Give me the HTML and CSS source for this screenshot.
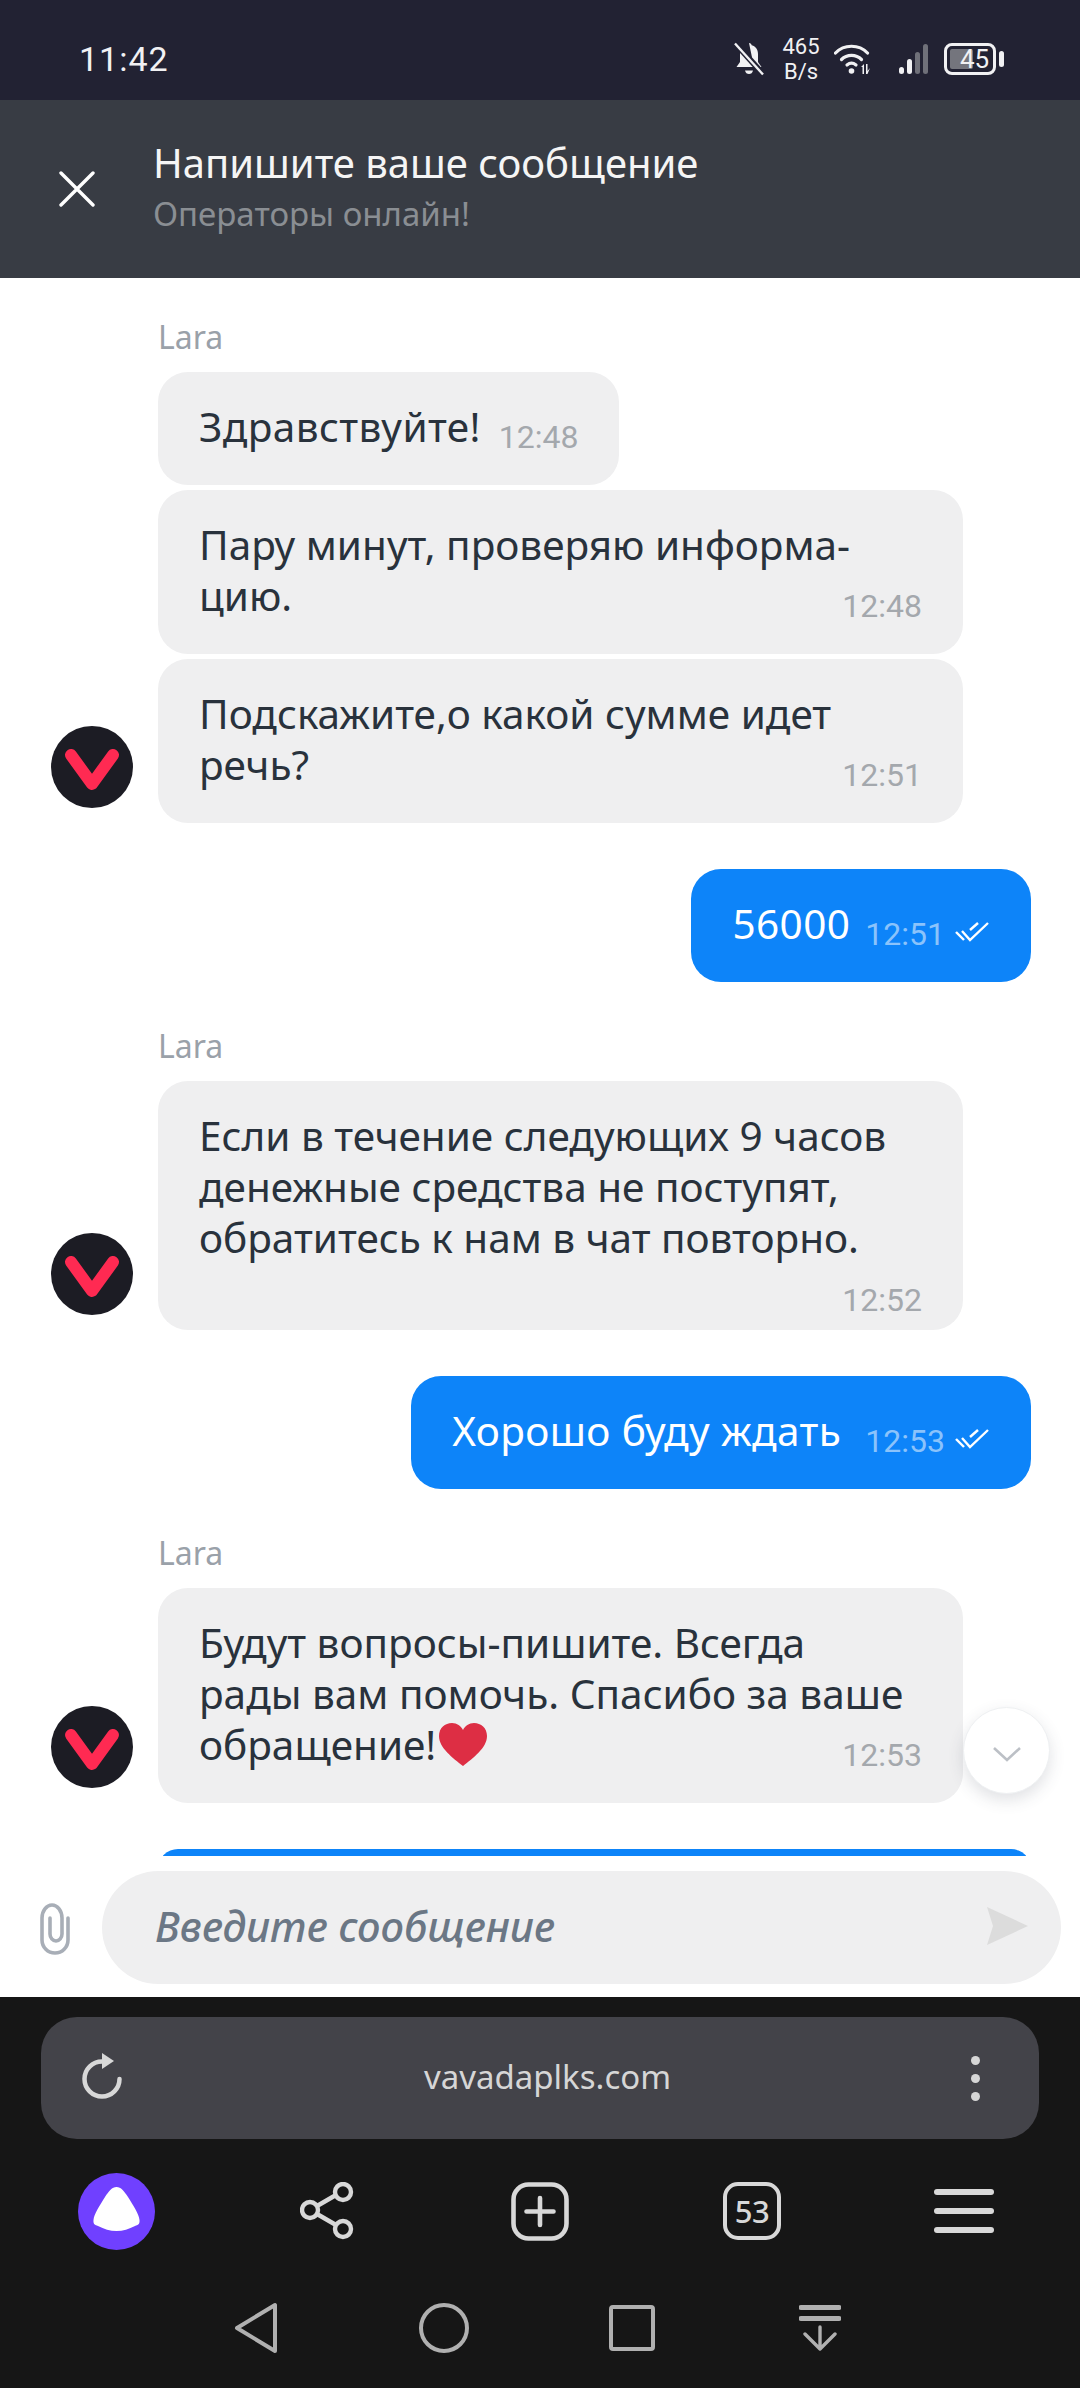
FILE: index.html
```html
<!DOCTYPE html>
<html lang="ru">
<head>
<meta charset="utf-8">
<title>Чат</title>
<link rel="stylesheet" href="styles.css">
</head>
<body>
<div class="app">
  <div class="status">
    <span class="clock">11:42</span>
    <div class="status-icons">
      <svg class="ic-bell" width="30" height="34" viewBox="0 0 30 34"><path d="M15 1c1.600 0 2.500 1 2.700 2.300C22 4.500 24 8 24 12v8l3.500 5H2.500L6 20v-8c0-1.500.3-3 1-4.300L20 25" fill="#f1f1f3"/><path d="M11 28.500h8c-.5 2.500-2 3.500-4 3.500s-3.500-1-4-3.500z" fill="#f1f1f3"/><path d="M1 1l28 31" stroke="#222233" stroke-width="6"/><path d="M1 1.500l28 31" stroke="#f1f1f3" stroke-width="2.400"/></svg>
      <div class="speed"><span>465</span><span>B/s</span></div>
      <svg class="ic-wifi" width="38" height="32" viewBox="0 0 38 32"><g fill="none" stroke="#f1f1f3" stroke-width="3.200" stroke-linecap="round"><path d="M1.500 10C10 1 25 1 33.500 10"/><path d="M7.500 16.500C13 11 22 11 27.500 16.500"/><path d="M13 22c3-2.500 6-2.500 9 0"/></g><circle cx="17.500" cy="28" r="2.800" fill="#f1f1f3"/><path d="M27 24l3-3v10h-1.500v-7zM32 21h1.500v7l2.500-3-2.500 6H32z" fill="#f1f1f3"/></svg>
      <div class="signal"><i class="b1"></i><i class="b2"></i><i class="b3"></i><i class="b4"></i></div>
      <div class="battery"><div class="battery-body"><span class="battery-fill"></span><span class="battery-num">45</span></div><i class="battery-tip"></i></div>
    </div>
  </div>

  <header class="head">
    <svg class="ic-close" width="36" height="36" viewBox="0 0 36 36"><path d="M2 2l32 32M34 2L2 34" stroke="#fff" stroke-width="3.400" stroke-linecap="round"/></svg>
    <div class="head-text">
      <div class="head-title">Напишите ваше сообщение</div>
      <div class="head-sub">Операторы онлайн!</div>
    </div>
  </header>

  <main class="chat">
    <section class="group">
      <div class="name">Lara</div>
      <div class="group-row">
        <div class="avatar"><svg width="82" height="82" viewBox="0 0 82 82"><circle cx="41" cy="41" r="41" fill="#1c1c24"/><path d="M20 29l21 29 21-29" fill="none" stroke="#ff2a52" stroke-width="12" stroke-linecap="round" stroke-linejoin="round"/></svg></div>
        <div class="stack">
          <div class="bubble bubble-in bubble-short"><p class="text">Здравствуйте!</p><span class="time">12:48</span></div>
          <div class="bubble bubble-in"><p class="text">Пару минут, проверяю информа-<br>цию.</p><span class="time time-end">12:48</span></div>
          <div class="bubble bubble-in"><p class="text">Подскажите,о какой сумме идет<br>речь?</p><span class="time time-end">12:51</span></div>
        </div>
      </div>
    </section>

    <div class="bubble bubble-out bubble-short"><p class="text">56000</p><span class="time">12:51</span><svg class="ic-check" width="35" height="22" viewBox="0 0 35 22"><g fill="none" stroke="#fff" stroke-width="2.400"><path d="M1 11l8 8"/><path d="M7 10l8 9L33 2"/><path d="M15 9l8-7"/></g></svg></div>

    <section class="group">
      <div class="name">Lara</div>
      <div class="group-row">
        <div class="avatar"><svg width="82" height="82" viewBox="0 0 82 82"><circle cx="41" cy="41" r="41" fill="#1c1c24"/><path d="M20 29l21 29 21-29" fill="none" stroke="#ff2a52" stroke-width="12" stroke-linecap="round" stroke-linejoin="round"/></svg></div>
        <div class="stack">
          <div class="bubble bubble-in"><p class="text">Если в течение следующих 9 часов<br>денежные средства не поступят,<br>обратитесь к нам в чат повторно.</p><span class="time time-below">12:52</span></div>
        </div>
      </div>
    </section>

    <div class="bubble bubble-out bubble-short"><p class="text text-gap">Хорошо буду ждать</p><span class="time">12:53</span><svg class="ic-check" width="35" height="22" viewBox="0 0 35 22"><g fill="none" stroke="#fff" stroke-width="2.400"><path d="M1 11l8 8"/><path d="M7 10l8 9L33 2"/><path d="M15 9l8-7"/></g></svg></div>

    <section class="group">
      <div class="name">Lara</div>
      <div class="group-row">
        <div class="avatar"><svg width="82" height="82" viewBox="0 0 82 82"><circle cx="41" cy="41" r="41" fill="#1c1c24"/><path d="M20 29l21 29 21-29" fill="none" stroke="#ff2a52" stroke-width="12" stroke-linecap="round" stroke-linejoin="round"/></svg></div>
        <div class="stack">
          <div class="bubble bubble-in"><p class="text">Будут вопросы-пишите. Всегда<br>рады вам помочь. Спасибо за ваше<br>обращение!<svg class="ic-heart" width="48" height="43" viewBox="0 0 48 43"><path d="M24 43C14 35 0 25 0 13 0 5 6 0 13 0c5 0 9 3 11 7 2-4 6-7 11-7 7 0 13 5 13 13 0 12-14 22-24 30z" fill="#dd2e44"/></svg></p><span class="time time-end">12:53</span></div>
        </div>
      </div>
    </section>

    <div class="bubble bubble-out bubble-cut"></div>

    <button class="scroll-down"><svg width="30" height="16" viewBox="0 0 30 16"><path d="M2 2l13 12L28 2" fill="none" stroke="#bcc0c6" stroke-width="2.600"/></svg></button>
  </main>

  <div class="composer">
    <svg class="ic-clip" width="34" height="54" viewBox="18 12 34 54"><path d="M48 28V50A13 13 0 0 1 22 50V28A10 13 0 0 1 42 28V44A6 7 0 0 1 30 44V28" fill="none" stroke="#a8aeb7" stroke-width="3.600" stroke-linecap="round"/></svg>
    <div class="input">
      <span class="placeholder">Введите сообщение</span>
      <svg class="ic-send" width="41" height="38" viewBox="0 0 41 38"><path d="M0 0l41 19L0 38l6-19z" fill="#dcdcdc"/></svg>
    </div>
  </div>

  <div class="browser">
    <div class="urlbar">
      <svg class="ic-reload" width="42" height="46" viewBox="0 0 42 46"><path d="M20 8.500A17.500 17.500 0 1 0 37.500 26" fill="none" stroke="#d8d8d8" stroke-width="4.500" stroke-linecap="round"/><path d="M20 0l12 8-12 8z" fill="#d8d8d8"/></svg>
      <span class="url">vavadaplks.com</span>
      <div class="dots"><i></i><i></i><i></i></div>
    </div>
    <div class="toolbar">
      <div class="tool"><svg width="77" height="77" viewBox="0 0 77 77"><circle cx="38.500" cy="38.500" r="38.500" fill="#7040ff"/><path d="M38.500 14C43 14 46 18 50 24 55 32 61 41 61.500 47 62 51 60 52 57 53 51 56 45 58 38.500 58 32 58 26 56 20 53 17 52 15 51 15.500 47 16 41 22 32 27 24 31 18 34 14 38.500 14z" fill="#fff"/></svg></div>
      <div class="tool"><svg width="56" height="58" viewBox="0 0 56 58"><g fill="none" stroke="#d8d8d8" stroke-width="4.400"><circle cx="10" cy="28" r="8"/><circle cx="43" cy="10" r="8"/><circle cx="43" cy="47" r="8"/><path d="M17 24l19-11M17 32l19 11"/></g></svg></div>
      <div class="tool"><svg width="58" height="59" viewBox="0 0 58 59"><rect x="2.500" y="2.500" width="53" height="54" rx="15" fill="none" stroke="#d8d8d8" stroke-width="4.600"/><path d="M29 16v27M15.500 29.500h27" stroke="#d8d8d8" stroke-width="4.600" stroke-linecap="round"/></svg></div>
      <div class="tool"><div class="tabs">53</div></div>
      <div class="tool"><div class="menu"><i></i><i></i><i></i></div></div>
    </div>
    <nav class="nav">
      <div class="tool"><svg width="44" height="52" viewBox="0 0 44 52"><path d="M41 3v46L3 26z" fill="none" stroke="#b0b0b0" stroke-width="4" stroke-linejoin="round"/></svg></div>
      <div class="tool"><svg width="50" height="50" viewBox="0 0 50 50"><circle cx="25" cy="25" r="23" fill="none" stroke="#b0b0b0" stroke-width="4"/></svg></div>
      <div class="tool"><svg width="46" height="46" viewBox="0 0 46 46"><rect x="2" y="2" width="42" height="42" rx="2" fill="none" stroke="#b0b0b0" stroke-width="4"/></svg></div>
      <div class="tool"><svg width="42" height="46" viewBox="0 0 42 46"><path d="M2 2.500h38M2 13.500h38" stroke="#b0b0b0" stroke-width="5" stroke-linecap="round"/><path d="M21 22v22M6 29l15 15 15-15" fill="none" stroke="#b0b0b0" stroke-width="3.400" stroke-linecap="round" stroke-linejoin="round"/></svg></div>
    </nav>
  </div>
</div>
</body>
</html>
```

FILE: styles.css
```css
* { box-sizing: border-box; }
html, body { margin: 0; padding: 0; }
body { background: #fff; font-family: "Noto Sans", sans-serif; }
.app { width: 1080px; height: 2388px; display: flex; flex-direction: column; overflow: hidden; }

/* status bar */
.status { height: 100px; flex: none; background: #222233; color: #f1f1f3; display: flex; align-items: center; justify-content: space-between; padding: 20px 76px 0 79px; font-family: Roboto, sans-serif; }
.clock { font-size: 34px; letter-spacing: 1px; line-height: 1; margin-top: -2px; }
.status-icons { display: flex; align-items: center; margin-top: -3px; }
.ic-bell { display: block; }
.speed { display: flex; flex-direction: column; align-items: center; width: 40px; margin-left: 17px; font-size: 22px; line-height: 25px; }
.ic-wifi { display: block; margin-left: 13px; }
.signal { display: flex; align-items: flex-end; gap: 3px; height: 30px; margin-left: 27px; }
.signal i { display: block; width: 5px; border-radius: 3px; background: #f1f1f3; }
.signal .b1 { height: 7px; }
.signal .b2 { height: 15px; }
.signal .b3 { height: 22px; background: #6f7079; }
.signal .b4 { height: 30px; background: #6f7079; }
.battery { display: flex; align-items: center; gap: 3px; margin-left: 16px; }
.battery-body { position: relative; width: 52px; height: 32px; border: 3px solid #f1f1f3; border-radius: 8px; display: flex; align-items: center; justify-content: center; font-size: 26px; line-height: 1; padding-left: 9px; }
.battery-fill { position: absolute; left: 3px; top: 3px; bottom: 3px; width: 23px; background: #74757d; border-radius: 2px; }
.battery-num { position: relative; }
.battery-tip { display: block; width: 5px; height: 16px; border-radius: 3px; background: #f1f1f3; }

/* header */
.head { height: 178px; flex: none; background: #383c44; display: flex; align-items: center; padding-left: 59px; }
.ic-close { display: block; flex: none; }
.head-text { margin-left: 58px; margin-top: -4px; }
.head-title { color: #f5f5f5; font-size: 40px; line-height: 52px; }
.head-sub { color: #8a8e93; font-size: 33px; line-height: 46px; margin-top: 2px; }

/* chat */
.chat { position: relative; flex: 1; min-height: 0; overflow: hidden; display: flex; flex-direction: column; gap: 46px; padding-top: 41px; background: #fff; }
.group { padding-left: 158px; position: relative; flex: none; }
.name { color: #9aa1a9; font-size: 32px; line-height: 36px; margin-bottom: 17px; }
.group-row { position: relative; }
.avatar { position: absolute; left: -107px; bottom: 15px; width: 82px; height: 82px; }
.avatar svg { display: block; }
.stack { display: flex; flex-direction: column; gap: 5px; align-items: flex-start; }
.bubble { flex: none; width: 805px; border-radius: 30px; padding: 29px 41px 33px; display: flex; flex-direction: column; }
.bubble-in { background: #efeff0; color: #29323c; }
.bubble-out { background: #0d84f9; color: #fff; align-self: flex-end; margin-right: 49px; width: auto; }
.text { margin: 0; font-size: 40.500px; line-height: 51px; white-space: nowrap; }
.time { font-family: Roboto, sans-serif; font-size: 32px; line-height: 30px; color: #a4a8ad; }
.bubble-out .time { color: #8bc3fb; }
.time-end { align-self: flex-end; margin-top: -30px; }
.time-below { align-self: flex-end; margin-top: 22px; margin-bottom: -18px; }
.bubble-short { flex-direction: row; align-items: flex-start; width: auto; }
.bubble-short .text { letter-spacing: .4px; }
.bubble-short .text-gap { margin-right: 9px; }
.bubble-short .time { margin-left: 18px; margin-top: 21px; }
.bubble-out.bubble-short .time { margin-left: 15px; }
.ic-check { display: block; flex: none; margin-left: 10px; margin-top: 23px; }
.ic-heart { display: inline-block; vertical-align: -6px; margin-left: 3px; }
.bubble-cut { width: 873px; height: 40px; flex: none; padding: 0; }
.scroll-down { position: absolute; left: 963px; top: 1429px; width: 87px; height: 87px; border: 1px solid #eef0f2; border-radius: 50%; background: #fff; box-shadow: 0 6px 16px rgba(60, 70, 90, .16); padding: 6px 0 0; display: flex; align-items: center; justify-content: center; }

/* composer */
.composer { height: 141px; flex: none; background: #fff; display: flex; align-items: flex-start; padding: 15px 19px 0 38px; }
.ic-clip { display: block; flex: none; margin-top: 31px; }
.input { flex: 1; height: 113px; margin-left: 30px; border-radius: 57px; background: #efeff0; display: flex; align-items: center; justify-content: space-between; padding: 0 33px 0 53px; }
.placeholder { color: #6b7785; font-size: 41.800px; font-style: italic; font-weight: 500; margin-top: -4px; }
.ic-send { display: block; margin-top: -4px; }

/* browser */
.browser { height: 391px; flex: none; background: #161616; padding-top: 20px; }
.urlbar { height: 122px; margin: 0 41px; border-radius: 36px; background: #434349; display: flex; align-items: center; justify-content: space-between; padding: 0 59px 0 41px; }
.ic-reload { display: block; margin-top: -4px; }
.url { color: #d6d6d6; font-size: 33px; margin-top: -4px; }
.dots { display: flex; flex-direction: column; gap: 9px; }
.dots i { display: block; width: 9px; height: 9px; border-radius: 50%; background: #d6d6d6; }
.toolbar { display: grid; grid-template-columns: repeat(5, 212px); padding-left: 10px; height: 144px; align-items: center; }
.tool { display: flex; align-items: center; justify-content: center; }
.tool svg { display: block; }
.tabs { width: 58px; height: 58px; border: 4.600px solid #d8d8d8; border-radius: 15px; color: #d8d8d8; font-size: 31px; font-weight: 500; display: flex; align-items: center; justify-content: center; letter-spacing: -.5px; }
.menu { display: flex; flex-direction: column; gap: 13px; width: 60px; }
.menu i { display: block; height: 6px; border-radius: 3px; background: #d8d8d8; }
.nav { display: grid; grid-template-columns: repeat(4, 188px); padding-left: 162px; height: 50px; margin-top: 19px; align-items: center; }
```
